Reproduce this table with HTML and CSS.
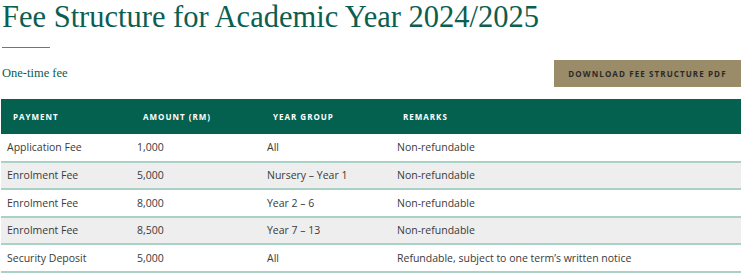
FILE: index.html
```html
<!DOCTYPE html>
<html lang="en">
<head>
<meta charset="utf-8">
<title>Fee Structure</title>
<link rel="stylesheet" href="styles.css">
</head>
<body>
<main class="page">
  <h1 class="title">Fee Structure for Academic Year 2024/2025</h1>
  <div class="rule"></div>
  <div class="bar">
    <p class="subtitle">One-time fee</p>
    <a class="btn" href="#">Download Fee Structure PDF</a>
  </div>
  <table class="fees">
    <thead>
      <tr><th>Payment</th><th>Amount (RM)</th><th>Year Group</th><th>Remarks</th></tr>
    </thead>
    <tbody>
      <tr><td>Application Fee</td><td>1,000</td><td>All</td><td>Non-refundable</td></tr>
      <tr><td>Enrolment Fee</td><td>5,000</td><td>Nursery – Year 1</td><td>Non-refundable</td></tr>
      <tr><td>Enrolment Fee</td><td>8,000</td><td>Year 2 – 6</td><td>Non-refundable</td></tr>
      <tr><td>Enrolment Fee</td><td>8,500</td><td>Year 7 – 13</td><td>Non-refundable</td></tr>
      <tr><td>Security Deposit</td><td>5,000</td><td>All</td><td>Refundable, subject to one term’s written notice</td></tr>
    </tbody>
  </table>
</main>
</body>
</html>
```

FILE: styles.css
```css
html, body { margin: 0; padding: 0; background: #fff; }
.page { margin: 0 2px 0 1px; }
.title {
  margin: 0;
  padding-left: 1px;
  font-family: "Liberation Serif", "Times New Roman", serif;
  font-weight: 400;
  font-size: 30.5px;
  line-height: 34px;
  color: #0b5e50;
}
.rule {
  width: 48px;
  height: 1px;
  margin: 13px 0 0 1px;
  background: #3f8d7f;
}
.bar {
  display: flex;
  justify-content: space-between;
  align-items: center;
  margin-top: 12px;
}
.subtitle {
  margin: 0;
  padding-left: 1px;
  font-family: "Liberation Serif", "Times New Roman", serif;
  font-size: 12.5px;
  color: #0b5e50;
}
.btn {
  display: block;
  width: 187px;
  height: 27px;
  line-height: 27px;
  text-align: center;
  background: #9a8b69;
  color: #2a2a2a;
  text-decoration: none;
  text-transform: uppercase;
  font-family: "Open Sans", sans-serif;
  font-weight: 700;
  font-size: 8px;
  letter-spacing: 1.1px;
}
.fees {
  width: 100%;
  margin-top: 12px;
  border-collapse: collapse;
  font-family: "Open Sans", sans-serif;
}
.fees th {
  height: 35px;
  padding: 0 12px;
  background: #04604f;
  color: #fff;
  text-align: left;
  text-transform: uppercase;
  font-size: 8px;
  font-weight: 700;
  letter-spacing: 1px;
}
.fees th:nth-child(1), .fees td:nth-child(1) { width: 130px; }
.fees th:nth-child(2), .fees td:nth-child(2) { width: 130px; }
.fees th:nth-child(3), .fees td:nth-child(3) { width: 130px; }
.fees th, .fees td { box-sizing: border-box; }
.fees td {
  height: 27.5px;
  padding: 0 6px;
  font-size: 10.5px;
  color: #3a3a3a;
  border-bottom: 2px solid #a9d1c6;
}
.fees tbody tr:nth-child(even) td { background: #eeeeee; }
```
